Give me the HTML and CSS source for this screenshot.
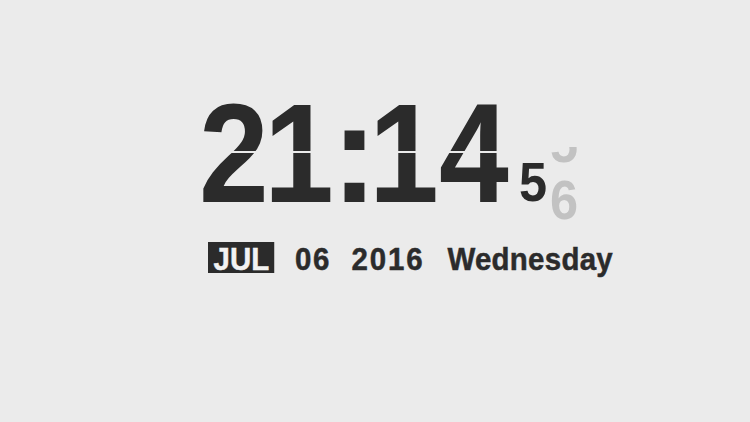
FILE: index.html
```html
<!DOCTYPE html>
<html lang="en">
<head>
<meta charset="utf-8">
<title>Clock</title>
<link rel="stylesheet" href="styles.css">
</head>
<body>
<main class="clock">
  <div class="time">
    <span class="d d-a">2</span>
    <span class="d d-b">1</span>
    <span class="colon">:</span>
    <span class="d d-c">1</span>
    <span class="d d-d">4</span>
    <span class="sec">5</span>
    <span class="roll">
      <span class="strip">
        <span class="roll-digit">5</span>
        <span class="roll-digit">6</span>
      </span>
    </span>
  </div>
  <div class="date">
    <span class="month">JUL</span>
    <span class="num">06</span>
    <span class="num">2016</span>
    <span class="day">Wednesday</span>
  </div>
</main>
</body>
</html>
```

FILE: styles.css
```css
html, body {
  margin: 0;
  padding: 0;
  background: #ebebeb;
}
body {
  width: 750px;
  height: 422px;
  overflow: hidden;
  font-family: "Liberation Sans", Arial, sans-serif;
  font-weight: bold;
  color: #2b2b2b;
}
.clock {
  padding: 83px 0 0 204px;
}
.time {
  display: flex;
  align-items: flex-start;
  height: 141px;
}
.d, .colon {
  position: relative;
  display: flex;
  justify-content: center;
  font-size: 141px;
  line-height: 141px;
  height: 141px;
}
.d {
  transform: scaleX(0.89);
}
.d-a { width: 60px; }
.d-b { width: 70px; }
.colon { width: 41px; }
.d-c { width: 58px; }
.d-d { width: 82px; }
.d::after {
  content: "";
  position: absolute;
  left: -10px;
  right: -10px;
  top: 68px;
  height: 2px;
  background: #ebebeb;
}
.sec {
  display: flex;
  justify-content: center;
  width: 30px;
  margin-left: 3px;
  margin-top: 71px;
  font-size: 56px;
  line-height: 56px;
  transform: scaleX(0.9);
}
.roll {
  display: block;
  width: 32px;
  height: 78px;
  margin-top: 64px;
  overflow: hidden;
}
.strip {
  display: flex;
  flex-direction: column;
  margin-top: -33px;
  color: #c2c2c2;
  font-size: 56px;
  line-height: 57px;
}
.roll-digit {
  display: flex;
  justify-content: center;
  transform: scaleX(0.9);
}
.date {
  display: flex;
  align-items: baseline;
  gap: 22px;
  margin: 18px 0 0 4px;
  font-size: 32px;
  line-height: 28px;
  transform: scaleX(0.92);
  transform-origin: left center;
  -webkit-text-stroke: 0.5px currentColor;
}
.month {
  background: #2b2b2b;
  color: #f2f2f2;
  padding: 3px 6px 0;
}
.num {
  letter-spacing: 2px;
}
.day {
  margin-left: 3px;
  letter-spacing: 0.3px;
}
```
